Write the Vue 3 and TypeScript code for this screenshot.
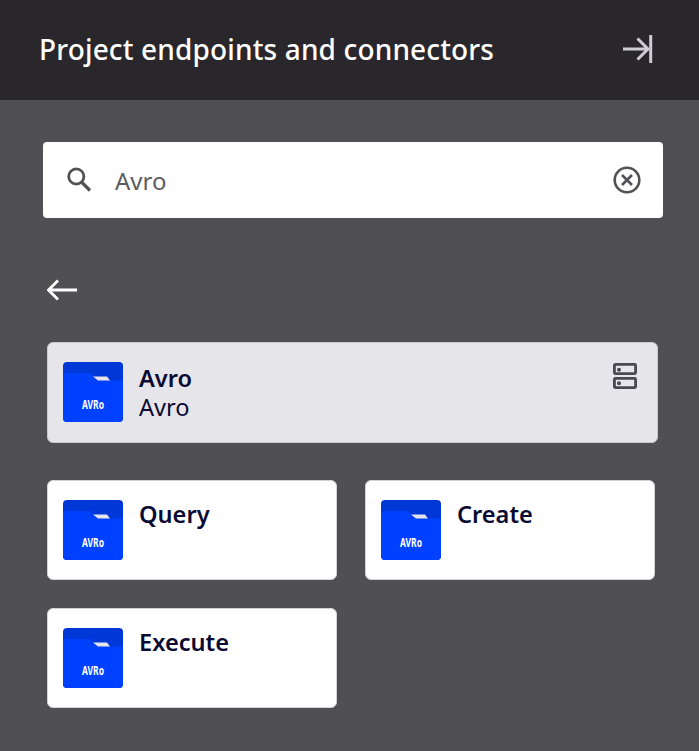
<script setup lang="ts">
const actions: string[] = ['Query', 'Create', 'Execute']
</script>

<template>
  <div class="panel">
    <header class="head">
      <h1 class="title">Project endpoints and connectors</h1>
      <svg class="collapse" width="32" height="32" viewBox="0 0 32 32" fill="none" stroke="#cfcdd4" stroke-width="3">
        <path d="M2 16h25M16.500 5.500 27 16 16.500 26.500" />
        <path d="M29.700 2v28" />
      </svg>
    </header>
    <main class="body">
      <div class="search">
        <svg class="search-icon" width="26" height="28" viewBox="0 0 26 28" fill="none" stroke="#525156" stroke-width="2.800">
          <circle cx="9.300" cy="12.500" r="7.600" />
          <path d="m15 18.500 8 8" stroke-width="3.200" />
        </svg>
        <span class="query">Avro</span>
        <svg class="clear" width="28" height="28" viewBox="0 0 28 28" fill="none" stroke="#525156" stroke-width="2.600">
          <circle cx="14" cy="14" r="12.300" />
          <path d="m9 9 10 10M19 9 9 19" />
        </svg>
      </div>
      <svg class="back" width="32" height="24" viewBox="0 0 32 24" fill="none" stroke="#fff" stroke-width="2.800">
        <path d="M1.500 12H30M11 2.500 1.500 12l9.500 9.500" />
      </svg>
      <section class="card selected">
        <svg class="logo" width="60" height="60" viewBox="0 0 60 60">
          <rect width="60" height="60" rx="4" fill="#0038d8" />
          <path d="M0 11h27l7 7.500h26V56a4 4 0 0 1-4 4H4a4 4 0 0 1-4-4Z" fill="#0040ff" />
          <path d="M30 14.500h14l3 4H35Z" fill="#e6e4ea" />
          <text x="19" y="47" class="logo-text" textLength="22" lengthAdjust="spacingAndGlyphs">AVRo</text>
        </svg>
        <div class="labels">
          <div class="name">Avro</div>
          <div class="sub">Avro</div>
        </div>
        <svg class="server" width="26" height="28" viewBox="0 0 26 28" fill="none" stroke="#49484e" stroke-width="2.800">
          <rect x="2.400" y="2.400" width="21.200" height="9.200" rx="1" />
          <rect x="2.400" y="16.400" width="21.200" height="9.200" rx="1" />
          <circle cx="7" cy="7.700" r="2" fill="#49484e" stroke="none" />
          <circle cx="7" cy="21.300" r="2" fill="#49484e" stroke="none" />
        </svg>
      </section>
      <div class="grid">
        <section v-for="action in actions" :key="action" class="card">
          <svg class="logo" width="60" height="60" viewBox="0 0 60 60">
            <rect width="60" height="60" rx="4" fill="#0038d8" />
            <path d="M0 11h27l7 7.500h26V56a4 4 0 0 1-4 4H4a4 4 0 0 1-4-4Z" fill="#0040ff" />
            <path d="M30 14.500h14l3 4H35Z" fill="#e6e4ea" />
            <text x="19" y="47" class="logo-text" textLength="22" lengthAdjust="spacingAndGlyphs">AVRo</text>
          </svg>
          <div class="labels">
            <div class="name">{{ action }}</div>
          </div>
        </section>
      </div>
    </main>
  </div>
</template>

<style>
html, body { background: #504f54; }
</style>

<style scoped>
.panel {
  width: 699px;
  height: 751px;
  overflow: hidden;
  background: #504f54;
  font-family: "Noto Sans", "Open Sans", sans-serif;
}
.head {
  box-sizing: border-box;
  height: 100px;
  padding: 0 46px 0 39px;
  display: flex;
  align-items: center;
  justify-content: space-between;
  background: #2a272c;
}
.title {
  margin: -2px 0 0;
  font-size: 28px;
  font-weight: 500;
  letter-spacing: 0.15px;
  color: #fff;
}
.collapse { flex: none; margin-top: -2px; }
.body {
  box-sizing: border-box;
  padding: 42px 42px 0 47px;
}
.search {
  box-sizing: border-box;
  width: 620px;
  height: 76px;
  margin-left: -4px;
  padding: 0 22px 0 24px;
  display: flex;
  align-items: center;
  background: #fff;
  border-radius: 4px;
}
.search-icon { flex: none; margin-top: -4px; }
.query {
  flex: 1;
  margin-left: 22px;
  font-size: 24px;
  color: #5c5b60;
}
.back { display: block; margin-top: 60px; }
.card {
  box-sizing: border-box;
  height: 100px;
  padding: 19px 15px;
  display: flex;
  align-items: flex-start;
  background: #fff;
  border: 1px solid #d2d1d6;
  border-radius: 6px;
}
.selected {
  position: relative;
  width: 611px;
  height: 101px;
  margin-top: 40px;
  background: #e6e5ea;
  border-color: #c8c7cc;
}
.logo { flex: none; }
.logo-text {
  font-family: "Noto Sans", sans-serif;
  font-size: 12px;
  font-weight: 700;
  fill: #fff;
}
.labels { margin-left: 16px; color: #0a0a32; }
.name {
  font-size: 23.600px;
  font-weight: 600;
  line-height: 29px;
  margin-top: 0;
}
.selected .name { margin-top: 2px; }
.sub {
  font-size: 23.600px;
  line-height: 29px;
}
.server { position: absolute; top: 19px; right: 19px; }
.grid {
  width: 608px;
  margin-top: 37px;
  display: grid;
  grid-template-columns: 290px 290px;
  column-gap: 28px;
  row-gap: 28px;
}
</style>
